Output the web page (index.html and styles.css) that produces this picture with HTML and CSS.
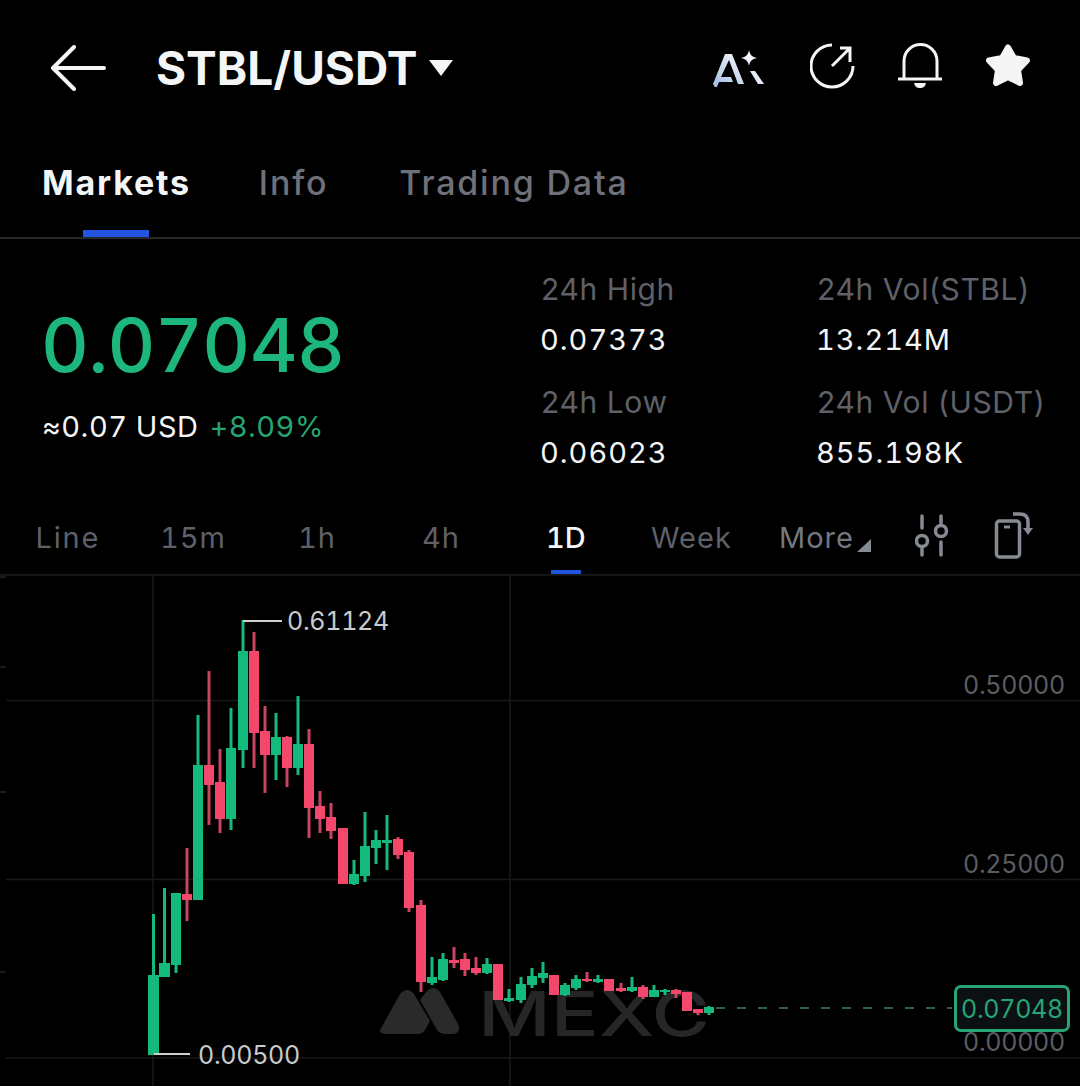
FILE: index.html
```html
<!DOCTYPE html>
<html lang="en">
<head>
<meta charset="utf-8">
<title>STBL/USDT</title>
<link rel="stylesheet" href="styles.css">
</head>
<body>
<div class="page">
  <header class="topbar">
    <svg class="back" viewBox="0 0 56 46" width="56" height="46"><path d="M54 23H3M24 2 3 23l21 21" fill="none" stroke="#f4f5f6" stroke-width="4" stroke-linecap="round" stroke-linejoin="round"/></svg>
    <h1 class="pair">STBL/USDT</h1>
    <svg class="caret" viewBox="0 0 24 16" width="24" height="16"><path d="M0 0h24L12 16z" fill="#f4f5f6"/></svg>
    <div class="top-icons">
      <svg viewBox="713 49 54 38" width="54" height="38"><defs><linearGradient id="ai" x1="0" y1="1" x2="1" y2="0"><stop offset="0" stop-color="#9db8e2"/><stop offset=".6" stop-color="#e6edf6"/><stop offset="1" stop-color="#fff"/></linearGradient></defs><path d="M713 84 725 54h7l12 30h-6l-9-24-8 17h10l2 5h-14l-3 7zM750 71h5l9 13h-6zM749 50c1 5 3 7 8 8-5 1-7 3-8 8-1-5-3-7-8-8 5-1 7-3 8-8z" fill="url(#ai)"/></svg>
      <svg viewBox="810 43 46 50" width="46" height="50"><path d="M832 45A21 21 0 1 0 853 66M832 66 850 48M840 48h10v14" fill="none" stroke="#f4f5f6" stroke-width="3"/></svg>
      <svg viewBox="895 43 48 50" width="48" height="50" class="bell"><path d="M904 79V61a16 16 0 0 1 33 0v18M898 79h44" fill="none" stroke="#f4f5f6" stroke-width="3"/><path d="M914 83h12c-1 4-3 5-6 5s-5-1-6-5z" fill="#f4f5f6"/></svg>
      <svg viewBox="986 44 46 48" width="46" height="48"><path d="M1008 47.500 1014 58 1027 60.500 1018 70 1020 83 1008 77 996 83 998 70 989 60.500 1002 58z" fill="#f4f5f6" stroke="#f4f5f6" stroke-width="6" stroke-linejoin="round"/></svg>
    </div>
  </header>

  <nav class="tabs">
    <span class="tab tab-active">Markets</span>
    <span class="tab">Info</span>
    <span class="tab tab-last">Trading Data</span>
  </nav>

  <section class="summary">
    <div class="price-block">
      <div class="price">0.07048</div>
      <div class="price-sub"><span>≈0.07 USD</span><span class="change">+8.09%</span></div>
    </div>
    <dl class="stats">
      <div class="stat"><dt>24h High</dt><dd>0.07373</dd></div>
      <div class="stat"><dt>24h Vol(STBL)</dt><dd>13.214M</dd></div>
      <div class="stat"><dt>24h Low</dt><dd>0.06023</dd></div>
      <div class="stat"><dt>24h Vol (USDT)</dt><dd>855.198K</dd></div>
    </dl>
  </section>

  <div class="ranges">
    <span class="range r-line">Line</span>
    <span class="range r-15">15m</span>
    <span class="range r-1h">1h</span>
    <span class="range r-4h">4h</span>
    <span class="range r-1d range-active">1D</span>
    <span class="range r-week">Week</span>
    <span class="range r-more">More<i class="corner"></i></span>
    <svg class="r-set" viewBox="0 0 34 44" width="34" height="44"><path d="M7 2v12M7 34v7M26 2v7M26 28v13" stroke="#868a92" stroke-width="3.500" stroke-linecap="round" fill="none"/><circle cx="7" cy="27" r="5.500" fill="none" stroke="#868a92" stroke-width="3.500"/><circle cx="26" cy="17" r="5.500" fill="none" stroke="#868a92" stroke-width="3.500"/></svg>
    <svg class="r-rot" viewBox="0 0 40 48" width="40" height="48"><rect x="2.500" y="10" width="23" height="36" rx="3" fill="none" stroke="#868a92" stroke-width="3.500"/><path d="M10 16h6" stroke="#868a92" stroke-width="3"/><path d="M19 3h7q8 0 8 8v7" fill="none" stroke="#868a92" stroke-width="3.500"/><path d="M29 17h10l-5 7z" fill="#868a92"/></svg>
  </div>

  <main class="chart">
    <svg class="candles" viewBox="0 576 1080 510" width="1080" height="510">
      <g stroke="#18191b" stroke-width="1.500">
        <path d="M6 700.500H1080M6 879.500H1080M6 1058H1080"/>
        <path d="M153 576V1086M510 576V1086"/>
        <path d="M0 577H6M0 667H6M0 792H6M0 972H6" stroke="#242527"/>
      </g>
      <g fill="#2a2a2b">
        <path d="M380 1030 400 994q7-8 14 0l16 27-5 9q-2 4-8 4h-30q-8 0-7-4z"/>
        <path d="M426 992q7-8 14 0l17 30q6 12-6 12h-6q-5 0-8-4l-17-30z"/>
      </g>
      <text class="mark" x="478" y="1036" textLength="232" lengthAdjust="spacingAndGlyphs">MEXC</text>
      <path d="M716 1008H952" stroke="#3c7f63" stroke-width="1.500" stroke-dasharray="9 12"/>
      <g stroke-width="3">
        <g class="up">
          <path d="M153.500 914V975M164.500 888V977M176 893V973M198 715V900M231 708V830M243 620V768M276 713V780M298 696V775M354 860V885M365 812V882M376 830V864M387 815V870M432 957V985M443 953V981M487 958V974M509 989V1002M521 977V1003M532 968V988M543 962V983M565 983V996M576 975V990M598 975V983M632 977V992M654 985V997M665 989V995M709 1006V1015"/>
          <rect x="148" y="975" width="11" height="80"/><rect x="159" y="963" width="11" height="14"/><rect x="171" y="893" width="10" height="72"/><rect x="193" y="765" width="10" height="135"/><rect x="226" y="748" width="10" height="71"/><rect x="238" y="651" width="10" height="99"/><rect x="271" y="737" width="10" height="18"/><rect x="293" y="744" width="10" height="24"/><rect x="349" y="874" width="10" height="10"/><rect x="360" y="846" width="10" height="30"/><rect x="371" y="840" width="10" height="8"/><rect x="382" y="840" width="10" height="3"/><rect x="427" y="977" width="10" height="6"/><rect x="438" y="959" width="10" height="21"/><rect x="482" y="964" width="10" height="9"/><rect x="504" y="998" width="10" height="3"/><rect x="516" y="984" width="10" height="16"/><rect x="527" y="976" width="10" height="9"/><rect x="538" y="973" width="10" height="5"/><rect x="560" y="985" width="10" height="10"/><rect x="571" y="979" width="10" height="9"/><rect x="593" y="979" width="10" height="3"/><rect x="627" y="987" width="10" height="4"/><rect x="649" y="990" width="10" height="7"/><rect x="660" y="990" width="10" height="2"/><rect x="704" y="1007" width="10" height="6"/>
        </g>
        <g class="down">
          <path d="M187 848V921M209 671V825M220 749V833M254 632V768M265 706V793M287 736V787M309 729V838M320 791V833M331 803V839M398 837V859M409 850V912M421 900V992M454 947V968M465 953V976M476 957V975M587 972V982M621 983V992M643 985V999M676 989V998M698 1009V1015"/>
          <rect x="182" y="894" width="10" height="6"/><rect x="204" y="765" width="10" height="20"/><rect x="215" y="782" width="10" height="37"/><rect x="249" y="651" width="10" height="82"/><rect x="260" y="731" width="10" height="24"/><rect x="282" y="737" width="10" height="31"/><rect x="304" y="744" width="10" height="64"/><rect x="315" y="806" width="10" height="13"/><rect x="326" y="817" width="10" height="14"/><rect x="338" y="828" width="10" height="56"/><rect x="393" y="839" width="10" height="16"/><rect x="404" y="852" width="10" height="56"/><rect x="416" y="905" width="10" height="77"/><rect x="449" y="960" width="10" height="3"/><rect x="460" y="959" width="10" height="11"/><rect x="471" y="968" width="10" height="5"/><rect x="493" y="964" width="10" height="36"/><rect x="549" y="975" width="10" height="20"/><rect x="582" y="979" width="10" height="2"/><rect x="604" y="979" width="10" height="12"/><rect x="616" y="988" width="10" height="3"/><rect x="638" y="987" width="10" height="10"/><rect x="671" y="990" width="10" height="4"/><rect x="682" y="992" width="10" height="19"/><rect x="693" y="1009" width="10" height="4"/>
        </g>
      </g>
      <path d="M243 621H282M154 1054H190" stroke="#cfd0d2" stroke-width="2"/>
    </svg>
    <span class="hi-label">0.61124</span>
    <span class="lo-label">0.00500</span>
    <span class="axis axis-50">0.50000</span>
    <span class="axis axis-25">0.25000</span>
    <span class="axis axis-0">0.00000</span>
    <span class="last-price">0.07048</span>
  </main>
</div>
</body>
</html>
```
FILE: styles.css
```css
* { box-sizing: border-box; }
html, body { margin: 0; background: #000; }
body { font-family: Inter, "Liberation Sans", sans-serif; color: #f4f5f6; font-variant-numeric: tabular-nums; }
.page { width: 1080px; height: 1086px; overflow: hidden; display: flex; flex-direction: column; }

.topbar { height: 136px; display: flex; align-items: center; padding-left: 50px; padding-right: 48px; }
.back { display: block; }
.pair { margin: 0 0 0 50px; font-size: 46px; font-weight: 700; line-height: 1; }
.caret { margin-left: 12px; }
.top-icons { margin-left: auto; display: flex; align-items: center; gap: 43px; }
.bell { margin-left: -4px; }

.tabs { height: 103px; display: flex; gap: 68px; padding: 0 0 0 42px; border-bottom: 2px solid #26272a; align-items: flex-start; }
.tab { position: relative; font-size: 34px; font-weight: 500; line-height: 94px; letter-spacing: 1.800px; color: #6e7179; height: 101px; }
.tab-active { color: #f4f5f6; font-weight: 700; }
.tab-last { margin-left: 3px; }
.tab-active::after { content: ""; position: absolute; left: 41px; width: 66px; height: 7px; bottom: 0; background: #2354e0; }

.summary { height: 261px; display: flex; padding: 0 0 0 42px; }
.price-block { width: 499px; padding-top: 66px; }
.price { margin-left: -1px; font-size: 74px; font-weight: 500; line-height: 80px; color: #1db67d; letter-spacing: -.6px; }
.price-sub { display: flex; gap: 11px; margin-top: 24px; font-size: 29px; line-height: 36px; letter-spacing: .5px; }
.change { color: #25a570; }
.stats { margin: 0; flex: 1; display: grid; grid-template-columns: 276px 1fr; grid-auto-rows: 113px; padding-top: 30px; }
.stat dt { font-size: 30px; line-height: 40px; color: #5e6168; letter-spacing: .6px; font-variant-numeric: normal; }
.stat dd { margin: 10px 0 0 -1px; font-size: 29px; line-height: 42px; letter-spacing: 1px; color: #f4f5f6; }

.ranges { position: relative; height: 76px; flex: none; border-bottom: 2px solid #141517; }
.range { position: absolute; top: 20px; font-size: 29px; line-height: 36px; letter-spacing: 1px; color: #5e6168; }
.r-line { left: 35.500px; letter-spacing: 1.800px; }
.r-15 { left: 160px; }
.r-1h { left: 298px; }
.r-4h { left: 422px; }
.r-1d { left: 546px; letter-spacing: 0; }
.r-week { left: 651px; }
.r-more { left: 779px; color: #74777e; }
.range-active { color: #f4f5f6; font-weight: 500; }
.range-active::after { content: ""; position: absolute; left: 5px; width: 30px; height: 4px; top: 50px; background: #2354e0; }
.corner { position: absolute; right: -17px; bottom: 4px; border-style: solid; border-width: 0 0 13px 14px; border-color: transparent transparent #868a92 transparent; }
.r-set { position: absolute; left: 915px; top: 14px; }
.r-rot { position: absolute; left: 994px; top: 11px; }

.chart { position: relative; flex: 1; }
.candles { display: block; }
.up { fill: #14b97c; stroke: #14b97c; }
.up rect, .down rect { stroke: none; }
.down { fill: #f4476c; stroke: #c84460; }
.mark { font-size: 62px; font-weight: 500; fill: #262627; }
.hi-label, .lo-label, .axis { position: absolute; font-size: 25px; line-height: 30px; letter-spacing: -.3px; }
.hi-label { left: 287px; top: 30px; color: #c9cacc; }
.lo-label { left: 198px; top: 464px; color: #c9cacc; }
.axis { left: 963px; color: #5b5d61; }
.axis-50 { top: 94px; }
.axis-25 { top: 273px; }
.axis-0 { top: 451px; }
.last-price { position: absolute; left: 954px; top: 409px; width: 116px; height: 47px; border: 3px solid #26a575; border-radius: 7px; background: #0b1012; color: #26a575; font-size: 25px; line-height: 42px; letter-spacing: -.3px; text-align: center; }
```
